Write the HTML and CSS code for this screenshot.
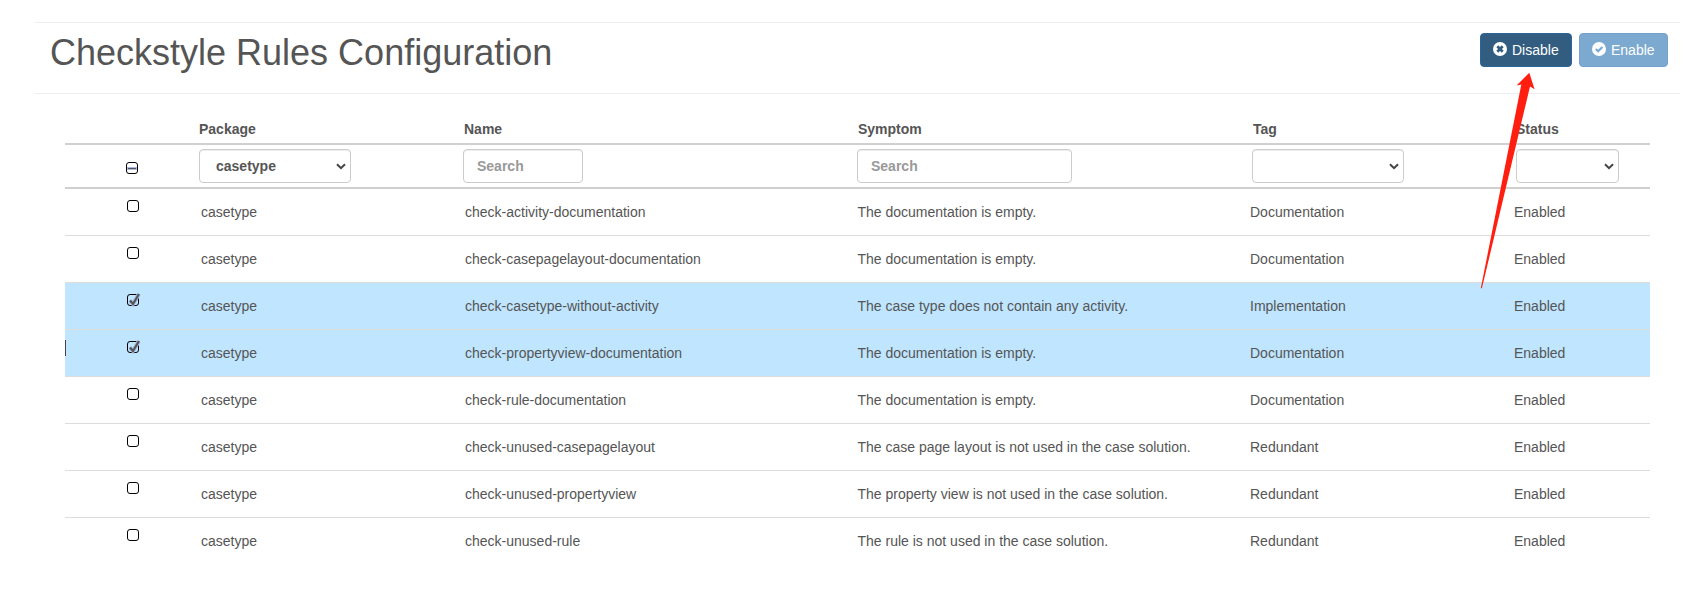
FILE: index.html
```
<!DOCTYPE html>
<html lang="en">
<head>
<meta charset="utf-8">
<title>Checkstyle Rules Configuration</title>
<link rel="stylesheet" href="styles.css">
</head>
<body>
<header class="page-header">
  <h1 class="title">Checkstyle Rules Configuration</h1>
  <div class="actions">
    <button class="btn btn-disable"><svg class="btn-icon" viewBox="0 0 14 14"><circle cx="7" cy="7" r="7" fill="#fff"/><path d="M4.3 4.3l5.4 5.4M9.7 4.3L4.3 9.7" stroke="#325d80" stroke-width="2.7"/></svg>Disable</button>
    <button class="btn btn-enable"><svg class="btn-icon" viewBox="0 0 14 14"><circle cx="7" cy="7" r="7" fill="#fff"/><path d="M3.8 7l2.3 2.3 4.3-4.4" fill="none" stroke="#7ca9d0" stroke-width="2.1"/></svg>Enable</button>
  </div>
</header>
<main class="rules">
  <div class="row head">
    <span></span><span>Package</span><span>Name</span><span>Symptom</span><span>Tag</span><span>Status</span>
  </div>
  <div class="row filters">
    <span class="check-cell"><i class="box"><svg class="dash" viewBox="0 0 12 12"><path d="M1 6.5h10" stroke="#a9b9e0" stroke-width="3"/><path d="M2 6.5h8" stroke="#555" stroke-width="1"/></svg></i></span>
    <span class="field w-package">casetype<svg class="chevron" viewBox="0 0 10 7"><path d="M1 1.2l4 4 4-4"/></svg></span>
    <span class="field search w-name">Search</span>
    <span class="field search w-symptom">Search</span>
    <span class="field w-package"><svg class="chevron" viewBox="0 0 10 7"><path d="M1 1.2l4 4 4-4"/></svg></span>
    <span class="field w-status"><svg class="chevron" viewBox="0 0 10 7"><path d="M1 1.2l4 4 4-4"/></svg></span>
  </div>
  <div class="row item"><span class="check-cell"><i class="box"></i></span><span>casetype</span><span>check-activity-documentation</span><span>The documentation is empty.</span><span>Documentation</span><span>Enabled</span></div>
  <div class="row item"><span class="check-cell"><i class="box"></i></span><span>casetype</span><span>check-casepagelayout-documentation</span><span>The documentation is empty.</span><span>Documentation</span><span>Enabled</span></div>
  <div class="row item selected"><span class="check-cell"><i class="box"><svg class="tick" viewBox="0 0 14 14"><path d="M3 7.5L6 11L12 1" fill="none" stroke="#a9b9e0" stroke-width="4"/><path d="M3 7.5L6 11L12 1" fill="none" stroke="#555" stroke-width="2.1"/></svg></i></span><span>casetype</span><span>check-casetype-without-activity</span><span>The case type does not contain any activity.</span><span>Implementation</span><span>Enabled</span></div>
  <div class="row item selected"><b class="caret"></b><span class="check-cell"><i class="box"><svg class="tick" viewBox="0 0 14 14"><path d="M3 7.5L6 11L12 1" fill="none" stroke="#a9b9e0" stroke-width="4"/><path d="M3 7.5L6 11L12 1" fill="none" stroke="#555" stroke-width="2.1"/></svg></i></span><span>casetype</span><span>check-propertyview-documentation</span><span>The documentation is empty.</span><span>Documentation</span><span>Enabled</span></div>
  <div class="row item"><span class="check-cell"><i class="box"></i></span><span>casetype</span><span>check-rule-documentation</span><span>The documentation is empty.</span><span>Documentation</span><span>Enabled</span></div>
  <div class="row item"><span class="check-cell"><i class="box"></i></span><span>casetype</span><span>check-unused-casepagelayout</span><span>The case page layout is not used in the case solution.</span><span>Redundant</span><span>Enabled</span></div>
  <div class="row item"><span class="check-cell"><i class="box"></i></span><span>casetype</span><span>check-unused-propertyview</span><span>The property view is not used in the case solution.</span><span>Redundant</span><span>Enabled</span></div>
  <div class="row item"><span class="check-cell"><i class="box"></i></span><span>casetype</span><span>check-unused-rule</span><span>The rule is not used in the case solution.</span><span>Redundant</span><span>Enabled</span></div>
</main>
<svg class="pointer" viewBox="0 0 60 220"><path d="M49.3 2.7L36.5 15.6L41.3 14.6L0.8 218.3H1.9L50 16.6L54.6 19.2Z" fill="#ff1e10"/></svg>
</body>
</html>
```
FILE: styles.css
```
* { box-sizing: border-box; }
body {
  margin: 0;
  position: relative;
  height: 615px;
  overflow: hidden;
  padding-top: 22px;
  background: #fff;
  color: #555;
  font: 14px/20px "Liberation Sans", Arial, sans-serif;
}
.page-header {
  display: flex;
  justify-content: space-between;
  align-items: flex-start;
  height: 72px;
  margin: 0 18px 0 35px;
  padding: 10px 12px 0 15px;
  border-top: 1px solid #eee;
  border-bottom: 1px solid #eee;
}
.title { margin: 0; font-size: 36px; font-weight: 400; line-height: 40px; }
.actions { display: flex; gap: 7px; }
.btn {
  display: flex;
  align-items: center;
  height: 34px;
  padding: 0 12px;
  border: 1px solid;
  border-radius: 4px;
  color: #fff;
  font: inherit;
}
.btn-disable { width: 92px; background: #325d80; border-color: #2b669a; }
.btn-enable { width: 89px; background: #7ca9d0; border-color: #76a2ca; }
.btn-icon { width: 14px; height: 14px; margin: -2px 5px 0 0; flex: none; }
.rules { margin: 25px 48px 0 65px; }
.row { display: grid; position: relative; white-space: nowrap; }
.head, .filters {
  grid-template-columns: 134px 264px 394px 395px 264px 1fr;
  font-weight: 700;
  border-bottom: 2px solid #d0d0d0;
}
.head { height: 26px; }
.head > span { padding-left: 1px; }
.head > span:nth-child(2), .head > span:last-child { padding-left: 0; }
.filters { height: 44px; padding-top: 4px; }
.item {
  grid-template-columns: 136px 264px 392.5px 392.5px 264px 1fr;
  height: 47px;
  padding-top: 13px;
  border-bottom: 1px solid #ddd;
}
.item:last-child { border-bottom: 0; }
.selected { background: #bfe5ff; }
.field {
  display: flex;
  align-items: center;
  justify-content: space-between;
  height: 34px;
  padding: 0 4px 0 16px;
  border: 1px solid #ccc;
  border-radius: 4px;
  box-shadow: inset 0 1px 1px rgba(0, 0, 0, .075);
}
.search { padding-left: 13px; color: #999; }
.w-package { width: 152px; }
.w-name { width: 120px; }
.w-symptom { width: 215px; }
.w-status { width: 103px; }
.chevron { width: 10px; height: 7px; margin-left: auto; }
.chevron path { fill: none; stroke: #444; stroke-width: 2; }
.check-cell { padding-left: 62px; }
.filters .check-cell { padding: 13px 0 0 61px; }
.item .check-cell { margin-top: -2px; }
.box {
  display: block;
  position: relative;
  width: 12px;
  height: 12px;
  border: 1px solid #000;
  border-radius: 3px;
}
.dash { position: absolute; left: -1px; top: -1px; width: 12px; height: 12px; }
.tick { position: absolute; left: -1px; top: -2px; width: 14px; height: 14px; }
.caret { position: absolute; left: 0; top: 10px; width: 1px; height: 16px; background: #444; }
.pointer { position: absolute; left: 1480px; top: 70px; width: 60px; height: 220px; }
```
